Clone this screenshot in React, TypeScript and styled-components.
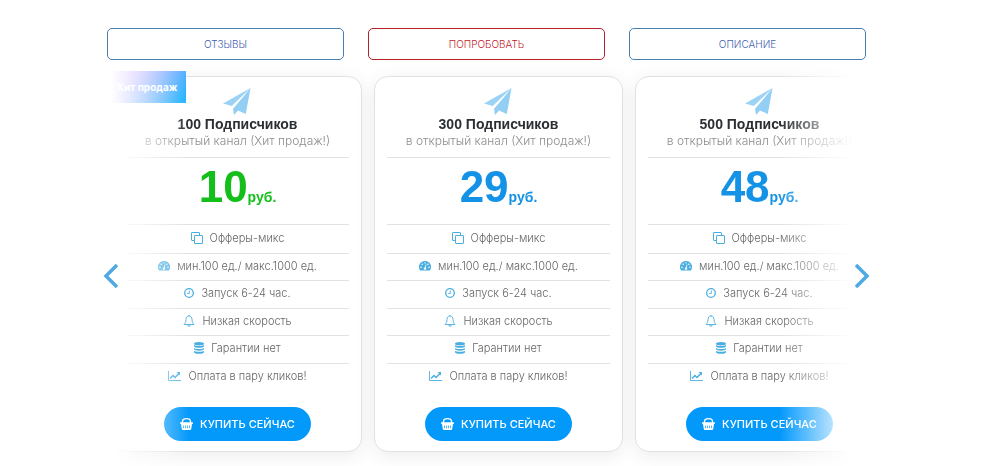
import React from 'react';
import styled, { createGlobalStyle } from 'styled-components';

const GlobalStyle = createGlobalStyle`
  * { box-sizing: border-box; }
  body { margin: 0; background: #fff; font-family: Inter, "Liberation Sans", sans-serif; }
`;

const Page = styled.main`
  padding: 28px 134px 0 107px;
  overflow: hidden;
`;

const Nav = styled.nav`
  display: grid;
  grid-template-columns: repeat(3, 1fr);
  gap: 24px;
`;

const NavLink = styled.a<{ $color: string; $text: string }>`
  display: flex;
  align-items: center;
  justify-content: center;
  height: 32px;
  border: 1px solid ${(p) => p.$color};
  border-radius: 5px;
  color: ${(p) => p.$text};
  font-size: 10px;
  font-weight: 300;
  text-decoration: none;
`;

const Carousel = styled.section`
  position: relative;
`;

const Viewport = styled.div`
  overflow: hidden;
  padding: 11px 0 26px 6px;
  mask-image: linear-gradient(to right, transparent 4px, #000 82px, #000 calc(100% - 86px), transparent calc(100% - 12px));
`;

const Track = styled.div`
  display: flex;
  gap: 12px;
  padding-top: 5px;
`;

const Card = styled.article`
  position: relative;
  flex: 0 0 calc((100% - 6px) / 3);
  display: flex;
  flex-direction: column;
  align-items: center;
  padding: 11px 12px 10px;
  border: 1px solid #e2e2e2;
  border-radius: 14px;
  background: #fff;
  box-shadow: 0 4px 20px rgba(0, 0, 0, 0.08);
`;

const Ribbon = styled.span`
  position: absolute;
  top: -6px;
  left: -2px;
  width: 74px;
  height: 32px;
  padding-right: 4px;
  line-height: 32px;
  text-align: center;
  background: linear-gradient(135deg, #c9a4ff 15%, #22b0ff 90%);
  color: #fff;
  font-size: 10px;
  font-weight: 700;
  white-space: nowrap;
`;

const Title = styled.h3`
  margin: 0;
  color: #2b2f33;
  font-family: "Liberation Sans", sans-serif;
  font-size: 14px;
  line-height: 18px;
  font-weight: 700;
  white-space: nowrap;
`;

const Subtitle = styled.p`
  margin: 0;
  color: #8c8c8c;
  font-size: 12px;
  line-height: 16px;
  font-weight: 300;
  white-space: nowrap;
`;

const Price = styled.p<{ $color: string }>`
  align-self: stretch;
  margin: 8px 0 0;
  height: 68px;
  border: solid #e2e2e2;
  border-width: 1px 0;
  color: ${(p) => p.$color};
  font-family: "Liberation Sans", sans-serif;
  font-size: 44px;
  line-height: 58px;
  font-weight: 700;
  text-align: center;
`;

const Unit = styled.small`
  font-size: 14px;
`;

const Features = styled.ul`
  align-self: stretch;
  display: grid;
  grid-auto-rows: 1fr;
  height: 165px;
  margin: 0;
  padding: 0;
  list-style: none;
`;

const Feature = styled.li`
  display: flex;
  align-items: center;
  justify-content: center;
  gap: 7px;
  padding-bottom: 2px;
  color: #666;
  font-size: 11px;
  font-weight: 300;
  white-space: nowrap;
  & + & { border-top: 1px solid #e2e2e2; }
`;

const Glyph = styled.svg`
  flex: none;
  display: block;
  color: #4aaee0;
`;

const BuyButton = styled.button`
  display: flex;
  align-items: center;
  justify-content: center;
  gap: 7px;
  width: 147px;
  height: 34px;
  margin-top: 17px;
  padding: 0;
  border: 0;
  border-radius: 17px;
  background: #0399fb;
  color: #fff;
  font-family: inherit;
  font-size: 11px;
  font-weight: 500;
  white-space: nowrap;
`;

const Arrow = styled.button<{ $side: 'left' | 'right' }>`
  position: absolute;
  top: 203px;
  ${(p) => p.$side}: -4px;
  padding: 0;
  border: 0;
  background: none;
  color: #4fa9e2;
`;

const Plane = () => (
  <svg width="28" height="27" viewBox="0 0 28 27" aria-hidden="true">
    <path d="M27.500 0 0 15.500 8.800 18z" fill="#9bd3f5" />
    <path d="M27.500 0 10 20.500 11 27l4-4.500 7.800 3.500z" fill="#93cef4" />
    <path d="M25 3 9.300 18.300l.9 2.200z" fill="#fff" />
  </svg>
);

const CopyIcon = () => (
  <Glyph width="12" height="12" viewBox="0 0 12 12" fill="none" stroke="currentColor">
    <rect x="3.5" y="3.5" width="8" height="8" rx=".5" />
    <path d="M3.5 8.5H1a.5.5 0 0 1-.5-.5V1A.5.5 0 0 1 1 .5h7a.5.5 0 0 1 .5.5v2.500" />
  </Glyph>
);
const GaugeIcon = () => (
  <Glyph width="12" height="10" viewBox="0 0 12 10">
    <path fill="currentColor" d="M6 0a6 6 0 0 0-5.100 9.200c.1.200.3.300.5.300h9.200c.2 0 .4-.1.500-.3A6 6 0 0 0 6 0z" />
    <path d="M6 7.500 7 3.500" stroke="#fff" strokeWidth=".8" />
    <g fill="#fff"><circle cx="6" cy="7.600" r="1.200" /><circle cx="2" cy="6.200" r=".8" /><circle cx="3.200" cy="3.200" r=".8" /><circle cx="6" cy="1.900" r=".7" /><circle cx="8.900" cy="3.200" r=".8" /><circle cx="10" cy="6.200" r=".8" /></g>
  </Glyph>
);
const ClockIcon = () => (
  <Glyph width="10" height="10" viewBox="0 0 10 10" fill="none" stroke="currentColor">
    <circle cx="5" cy="5" r="4.300" strokeWidth="1.300" />
    <path d="M5.300 2.500v3H3.200" strokeWidth=".9" />
  </Glyph>
);
const BellIcon = () => (
  <Glyph width="12" height="12" viewBox="0 0 12 12" fill="none" stroke="currentColor" strokeLinejoin="round">
    <path d="M6 1C4 1 3 2.500 3 4.500c0 2.500-.8 3.800-2 5h10c-1.200-1.200-2-2.500-2-5C9 2.500 8 1 6 1zM6 0v1" strokeWidth=".9" />
    <path d="M4.800 10c0 .8.500 1.400 1.200 1.400S7.200 10.800 7.200 10" strokeWidth=".9" />
  </Glyph>
);
const DatabaseIcon = () => (
  <Glyph width="10" height="12" viewBox="0 0 10 12" fill="currentColor">
    <ellipse cx="5" cy="1.700" rx="5" ry="1.700" />
    <path d="M0 3c1 1.300 9 1.300 10 0v1.400C9.500 6.200.5 6.200 0 4.400z" />
    <path d="M0 5.900c1 1.300 9 1.300 10 0v1.400C9.500 9.100.5 9.100 0 7.300z" />
    <path d="M0 8.800c1 1.300 9 1.300 10 0v1.400c-.5 2.200-9.500 2.200-10 0z" />
  </Glyph>
);
const ChartIcon = () => (
  <Glyph width="13" height="10" viewBox="0 0 13 10" fill="none" stroke="currentColor">
    <path d="M.5 0v9.500H13" strokeWidth=".9" />
    <path d="m2 7.500 3-3 2 2 4-4" strokeWidth="1.500" />
    <path d="M8.600 1H12v3.400z" fill="currentColor" stroke="none" />
  </Glyph>
);
const BasketIcon = () => (
  <svg width="13" height="12" viewBox="0 0 13 12" aria-hidden="true">
    <path d="M2.500 5V3.500C2.500 1.500 4 .7 6.500.7s4 .8 4 2.800V5" fill="none" stroke="#fff" strokeWidth="1.300" />
    <path d="M.5 4.300h12q.5 0 .5.700t-.5.900H12l-.8 5q-.2 1.100-1.200 1.100H3Q2 12 1.800 10.900L1 5.900H.5Q0 5.700 0 5t.5-.7z" fill="#fff" />
    <path d="M3.500 7.500v2.700M5.500 7.500v2.700M7.500 7.500v2.700M9.500 7.500v2.700" stroke="#0399fb" strokeWidth=".7" />
  </svg>
);

const Chevron = ({ flip }: { flip?: boolean }) => (
  <svg width="16" height="26" viewBox="0 0 16 26" fill="none" stroke="currentColor" strokeWidth="3.500" aria-hidden="true">
    <path d={flip ? 'm2 2 11 11L2 24' : 'M14 2 3 13l11 11'} />
  </svg>
);

const features = [
  { icon: <CopyIcon />, text: 'Офферы-микс' },
  { icon: <GaugeIcon />, text: 'мин.100 ед./ макс.1000 ед.' },
  { icon: <ClockIcon />, text: 'Запуск 6-24 час.' },
  { icon: <BellIcon />, text: 'Низкая скорость' },
  { icon: <DatabaseIcon />, text: 'Гарантии нет' },
  { icon: <ChartIcon />, text: 'Оплата в пару кликов!' },
];

const plans = [
  { count: 100, price: 10, color: '#14bf1c', hit: true },
  { count: 300, price: 29, color: '#1492e6', hit: false },
  { count: 500, price: 48, color: '#1492e6', hit: false },
];

export default function App() {
  return (
    <Page>
      <GlobalStyle />
      <Nav>
        <NavLink href="#reviews" $color="#4a7db0" $text="#4460b0">ОТЗЫВЫ</NavLink>
        <NavLink href="#try" $color="#b5202a" $text="#c4202c">ПОПРОБОВАТЬ</NavLink>
        <NavLink href="#about" $color="#4a7db0" $text="#4460b0">ОПИСАНИЕ</NavLink>
      </Nav>
      <Carousel>
        <Viewport>
          <Track>
            {plans.map((plan) => (
              <Card key={plan.count}>
                {plan.hit && <Ribbon>Хит продаж</Ribbon>}
                <Plane />
                <Title>{plan.count} Подписчиков</Title>
                <Subtitle>в открытый канал (Хит продаж!)</Subtitle>
                <Price $color={plan.color}>
                  {plan.price}
                  <Unit>руб.</Unit>
                </Price>
                <Features>
                  {features.map((f) => (
                    <Feature key={f.text}>
                      {f.icon}
                      {f.text}
                    </Feature>
                  ))}
                </Features>
                <BuyButton type="button">
                  <BasketIcon />
                  КУПИТЬ СЕЙЧАС
                </BuyButton>
              </Card>
            ))}
          </Track>
        </Viewport>
        <Arrow type="button" $side="left" aria-label="Назад"><Chevron /></Arrow>
        <Arrow type="button" $side="right" aria-label="Вперёд"><Chevron flip /></Arrow>
      </Carousel>
    </Page>
  );
}
